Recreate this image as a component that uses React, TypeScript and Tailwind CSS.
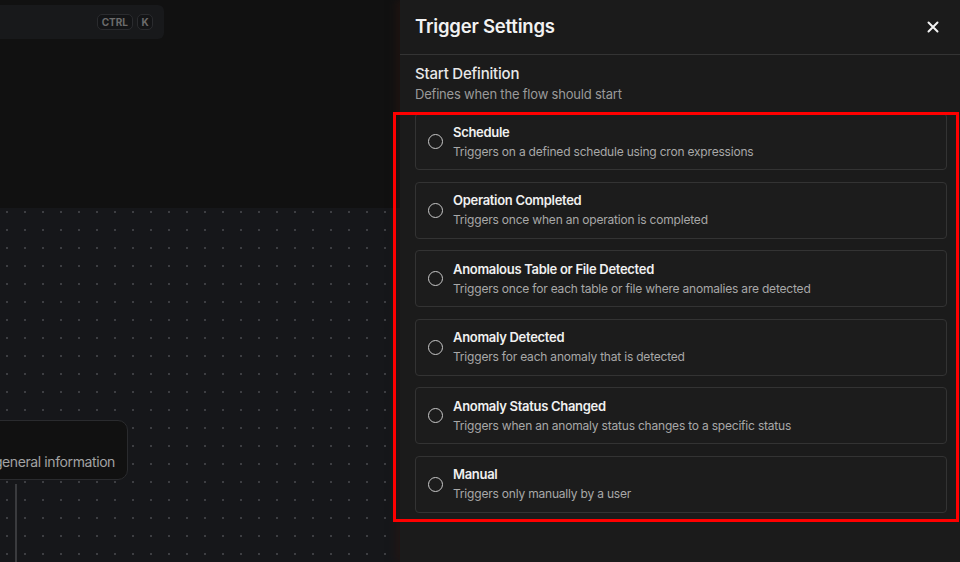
import React from "react";

const options = [
  { title: "Schedule", desc: "Triggers on a defined schedule using cron expressions" },
  { title: "Operation Completed", desc: "Triggers once when an operation is completed" },
  { title: "Anomalous Table or File Detected", desc: "Triggers once for each table or file where anomalies are detected" },
  { title: "Anomaly Detected", desc: "Triggers for each anomaly that is detected" },
  { title: "Anomaly Status Changed", desc: "Triggers when an anomaly status changes to a specific status" },
  { title: "Manual", desc: "Triggers only manually by a user" },
];

export default function App() {
  return (
    <div className="relative w-[960px] h-[562px] overflow-hidden flex bg-[#111111] font-['Inter','Noto_Sans',sans-serif]">
      {/* Left canvas area */}
      <div className="w-[400px] shrink-0 flex flex-col">
        <div className="h-[208px] bg-[#111111] pt-[5px]">
          <div className="h-[34px] w-[164px] bg-[#18191b] rounded-r-[6px] flex items-center justify-end pr-[11px] gap-[4px]">
            <span className="h-[16px] px-[4px] rounded-[5px] border border-[#2a2b2e] bg-[#131416] text-[10px] font-bold text-[#6b6b6b] flex items-center leading-none">CTRL</span>
            <span className="h-[16px] w-[16px] rounded-[5px] border border-[#2a2b2e] bg-[#131416] text-[10px] font-bold text-[#6b6b6b] flex items-center justify-center leading-none">K</span>
          </div>
        </div>
        <div className="relative flex-1 bg-[#16171a] bg-[radial-gradient(circle,#3d3e42_1px,transparent_1.2px)] [background-size:18px_18px] [background-position:-2px_-5px]">
          <div className="absolute left-[-60px] top-[212px] w-[188px] h-[60px] rounded-[10px] border border-[#2a2b2e] bg-[#111111] flex items-end justify-end pr-[12px] pb-[7px]">
            <span className="text-[14px] text-[#a3a3a3] leading-[20px] tracking-[-0.4px] whitespace-nowrap">general information</span>
          </div>
          <div className="absolute left-[15px] top-[276px] w-[2px] h-[100px] bg-[#3a3b3e]" />
        </div>
      </div>

      {/* Right panel */}
      <div className="relative w-[560px] shrink-0 bg-[#1b1b1b] flex flex-col shadow-[-4px_0_8px_rgba(40,22,16,0.6)]">
        <div className="h-[55px] border-b border-[#343434] pl-[15px] pr-[15px] flex items-center justify-between">
          <span className="text-[18.5px] font-semibold text-[#f2f2f2] tracking-[-0.2px]">Trigger Settings</span>
          <svg width="12" height="12" viewBox="0 0 12 12" className="mr-[6px]">
            <path d="M1.5 1.5 L10.5 10.5 M10.5 1.5 L1.5 10.5" stroke="#f2f2f2" strokeWidth="2" strokeLinecap="round" />
          </svg>
        </div>
        <div className="pl-[15px] pr-[13px] pt-[9px]">
          <div className="text-[15px] font-medium text-[#e8e8e8] leading-[20px] tracking-[-0.2px]">Start Definition</div>
          <div className="text-[13px] text-[#9a9a9a] leading-[20px] tracking-[-0.2px]">Defines when the flow should start</div>
          <div className="mt-[9px] flex flex-col gap-[11.6px]">
            {options.map((o) => (
              <div key={o.title} className="h-[57px] rounded-[4px] border border-[#333333] bg-[#1c1c1c] flex items-center pl-[12px] gap-[10px]">
                <div className="w-[15px] h-[15px] rounded-full border-[1.5px] border-[#c8c8c8] shrink-0" />
                <div className="flex flex-col">
                  <span className="text-[13px] font-semibold text-[#f0f0f0] leading-[18px] tracking-[-0.3px]">{o.title}</span>
                  <span className="mt-[2px] text-[12px] text-[#a8a8a8] leading-[18px] tracking-[-0.2px]">{o.desc}</span>
                </div>
              </div>
            ))}
          </div>
        </div>
      </div>

      {/* Red annotation box */}
      <div className="absolute left-[393px] top-[112px] w-[566px] h-[410px] border-[3px] border-[#ff0000] pointer-events-none" />
    </div>
  );
}
